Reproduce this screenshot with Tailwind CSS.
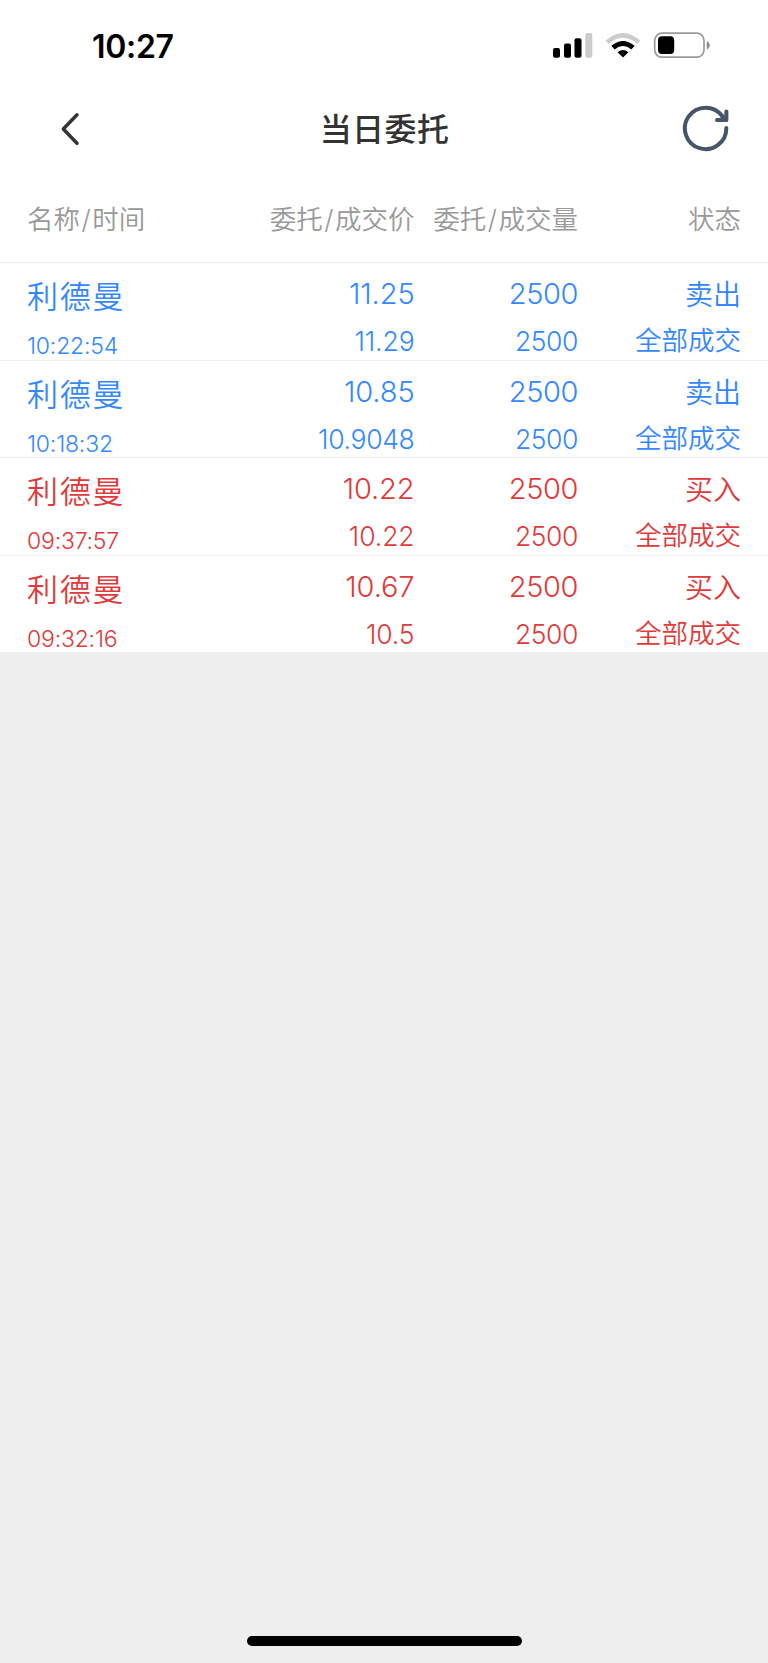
<!DOCTYPE html>
<html lang="zh-CN">
<head>
  <meta charset="UTF-8" />
  <meta name="viewport" content="width=device-width, initial-scale=1.0" />
  <title>当日委托</title>
  <script src="https://cdn.jsdelivr.net/npm/@tailwindcss/browser@4"></script>
</head>
<body class="bg-[#eeeeee] font-['Inter','Noto_Sans_CJK_SC',sans-serif]">
  <div class="h-[1663px] flex flex-col overflow-hidden">
    <!-- Status bar -->
    <div class="h-[90px] bg-white flex justify-between pl-[92px] pr-[58px] shrink-0">
      <span class="text-[32px] leading-[93px] font-semibold tracking-[-0.3px] text-black">10:27</span>
      <svg class="w-[160px] h-[28px] mt-[31px]" viewBox="550 31 160 28" fill="none">
        <g fill="#000">
          <rect x="553" y="48" width="7" height="9.8" rx="2" />
          <rect x="564" y="43.5" width="7" height="14.3" rx="2" />
          <rect x="574.5" y="38.2" width="7" height="19.6" rx="2" />
          <rect x="585.3" y="33" width="7" height="24.8" rx="2" fill="#cccccc" />
          <path d="M623 57.6 L617.6 52.2 Q623 48 628.4 52.2 Z" />
        </g>
        <path d="M613 47.6 Q623 39.4 633 47.6" stroke="#000" stroke-width="5" />
        <path d="M607.2 42.2 Q623 28.4 638.8 42.2" stroke="#cccccc" stroke-width="4.6" />
        <rect x="654.7" y="33.2" width="49.3" height="24" rx="7.2" stroke="#9b9b9b" stroke-width="1.7" />
        <rect x="658" y="36.3" width="16.2" height="17.7" rx="4" fill="#000" />
        <path d="M706.8 41 Q709.8 42.5 709.8 45.2 T706.8 49.4 Z" fill="#8c8c8c" />
      </svg>
    </div>

    <!-- Title bar -->
    <header class="h-[86px] bg-white flex justify-between pl-[60px] pr-[38px] text-[#333333] shrink-0">
      <svg class="w-[40px] h-[34px] mt-[22px]" viewBox="60 112 40 34" fill="none" stroke="#333333" stroke-width="3.4" stroke-linecap="round" stroke-linejoin="round">
        <path d="M77 114.8 L63.3 129 L77 143.3" />
      </svg>
      <h1 class="text-[32px] leading-[80px] tracking-[0.4px] font-medium -ml-[13px]">当日委托</h1>
      <svg class="w-[48px] h-[48px] mt-[15px]" viewBox="682 105 48 48" fill="none" stroke="#475569" stroke-width="4" stroke-linecap="round" stroke-linejoin="round">
        <path d="M726.3 128 A20.7 20.7 0 1 1 722.2 116" />
        <path d="M726.4 111.5 V120 H717" />
        <path d="M722 116 L726 120" />
      </svg>
    </header>

    <main class="bg-white shrink-0">
      <div class="h-[87px] grid grid-cols-[224.5px_163px_163.5px_163px] leading-[87px] pl-[27px] text-[26.5px] font-[350] text-[#999999] border-b border-[#f0f0f0] text-right whitespace-nowrap">
        <span class="text-left">名称<span class="mx-[1.5px]">/</span>时间</span>
        <span>委托<span class="mx-[1.5px]">/</span>成交价</span>
        <span>委托<span class="mx-[1.5px]">/</span>成交量</span>
        <span>状态</span>
      </div>

      <!-- Orders -->
      <div class="h-[97.5px] grid grid-cols-[224.5px_163px_163.5px_163px] pl-[27px] border-b border-[#f0f0f0] text-[#3388ff] text-right font-light">
        <div class="text-left">
          <p class="text-[31px] leading-[67px] tracking-[1.8px] font-[350]">利德曼</p>
          <p class="text-[23px] leading-[32px] tracking-[-0.2px]">10:22:54</p>
        </div>
        <div>
          <p class="text-[29px] leading-[61px] tracking-[-0.1px]">11.25</p>
          <p class="text-[26.5px] leading-[35px] tracking-[-0.1px]">11.29</p>
        </div>
        <div>
          <p class="text-[29px] leading-[61px] tracking-[-0.4px]">2500</p>
          <p class="text-[26.5px] leading-[35px] tracking-[-0.4px]">2500</p>
        </div>
        <div class="font-[350]">
          <p class="text-[28px] leading-[65px]">卖出</p>
          <p class="text-[26.5px] leading-[24px]">全部成交</p>
        </div>
      </div>
      <div class="h-[97.5px] grid grid-cols-[224.5px_163px_163.5px_163px] pl-[27px] border-b border-[#f0f0f0] text-[#3388ff] text-right font-light">
        <div class="text-left">
          <p class="text-[31px] leading-[67px] tracking-[1.8px] font-[350]">利德曼</p>
          <p class="text-[23px] leading-[32px] tracking-[-0.2px]">10:18:32</p>
        </div>
        <div>
          <p class="text-[29px] leading-[61px] tracking-[-0.1px]">10.85</p>
          <p class="text-[26.5px] leading-[35px] tracking-[-0.3px]">10.9048</p>
        </div>
        <div>
          <p class="text-[29px] leading-[61px] tracking-[-0.4px]">2500</p>
          <p class="text-[26.5px] leading-[35px] tracking-[-0.4px]">2500</p>
        </div>
        <div class="font-[350]">
          <p class="text-[28px] leading-[65px]">卖出</p>
          <p class="text-[26.5px] leading-[24px]">全部成交</p>
        </div>
      </div>
      <div class="h-[97.5px] grid grid-cols-[224.5px_163px_163.5px_163px] pl-[27px] border-b border-[#f0f0f0] text-[#e03a3a] text-right font-light">
        <div class="text-left">
          <p class="text-[31px] leading-[67px] tracking-[1.8px] font-[350]">利德曼</p>
          <p class="text-[23px] leading-[32px] tracking-[-0.2px]">09:37:57</p>
        </div>
        <div>
          <p class="text-[29px] leading-[61px] tracking-[-0.1px]">10.22</p>
          <p class="text-[26.5px] leading-[35px] tracking-[-0.1px]">10.22</p>
        </div>
        <div>
          <p class="text-[29px] leading-[61px] tracking-[-0.4px]">2500</p>
          <p class="text-[26.5px] leading-[35px] tracking-[-0.4px]">2500</p>
        </div>
        <div class="font-[350]">
          <p class="text-[28px] leading-[65px]">买入</p>
          <p class="text-[26.5px] leading-[24px]">全部成交</p>
        </div>
      </div>
      <div class="h-[97.5px] grid grid-cols-[224.5px_163px_163.5px_163px] pl-[27px] border-b border-[#f0f0f0] text-[#e03a3a] text-right font-light">
        <div class="text-left">
          <p class="text-[31px] leading-[67px] tracking-[1.8px] font-[350]">利德曼</p>
          <p class="text-[23px] leading-[32px] tracking-[-0.2px]">09:32:16</p>
        </div>
        <div>
          <p class="text-[29px] leading-[61px] tracking-[-0.1px]">10.67</p>
          <p class="text-[26.5px] leading-[35px] tracking-[-0.1px]">10.5</p>
        </div>
        <div>
          <p class="text-[29px] leading-[61px] tracking-[-0.4px]">2500</p>
          <p class="text-[26.5px] leading-[35px] tracking-[-0.4px]">2500</p>
        </div>
        <div class="font-[350]">
          <p class="text-[28px] leading-[65px]">买入</p>
          <p class="text-[26.5px] leading-[24px]">全部成交</p>
        </div>
      </div>
    </main>

    <!-- Home indicator -->
    <div class="mt-auto mb-[17px] mx-auto w-[275px] h-[10px] rounded-full bg-black shrink-0"></div>
  </div>
</body>
</html>
